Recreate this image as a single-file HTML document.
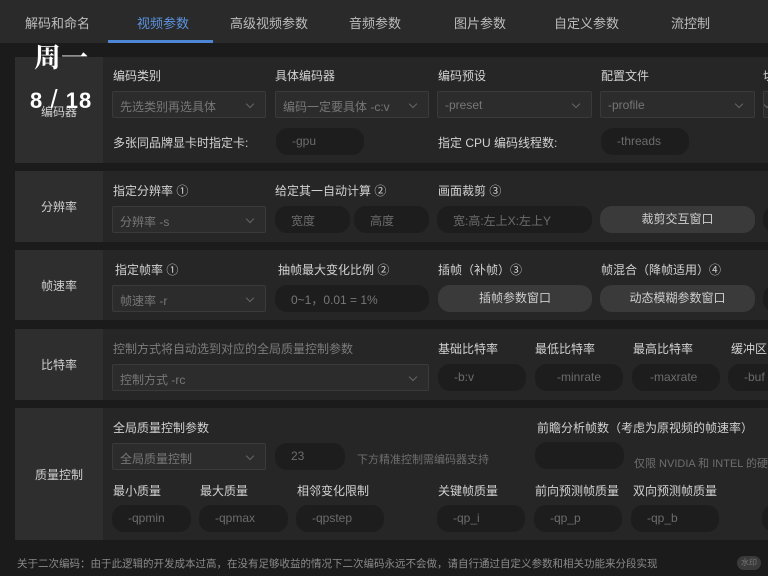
<!DOCTYPE html>
<html><head><meta charset="utf-8"><style>
*{margin:0;padding:0;box-sizing:border-box}
body{width:768px;height:576px;background:#1b1b1b;overflow:hidden;position:relative;font-family:"Liberation Sans","Noto Sans CJK SC",sans-serif;color:#cfcfcf;font-size:12px}
.a{position:absolute;white-space:nowrap}
.tabs{position:absolute;left:0;top:0;width:768px;height:43px;background:#2a2a2a}
.tab{position:absolute;top:13px;font-size:13px;color:#bdbdbd}
.sec{position:absolute;left:15px;width:753px;background:#262626}
.lab{position:absolute;left:0;top:0;bottom:0;width:88px;background:#2e2e2e;display:flex;align-items:center;justify-content:center;font-size:12px;color:#d0d0d0}
.l{position:absolute;font-size:12px;color:#d2d2d2;white-space:nowrap}
.sel{position:absolute;height:27px;background:#2c2c2c;border:1px solid #3a3a3a;border-radius:2px;color:#777;font-size:12px;padding:6px 7px;white-space:nowrap;overflow:hidden}
.sel:after{content:"";position:absolute;right:12px;top:9px;width:5px;height:5px;border-right:1px solid #666;border-bottom:1px solid #666;transform:rotate(45deg)}
.p{position:absolute;height:27px;background:#1d1d1d;border-radius:12px;color:#6c6c6c;font-size:12px;padding:6px 16px;white-space:nowrap;overflow:hidden}
.b{position:absolute;height:27px;background:#3a3a3a;border-radius:12px;color:#cfcfcf;font-size:12px;text-align:center;line-height:27px}
.c{font-size:11px}
</style></head><body>
<div class="tabs">
<div class="tab" style="left:25px">解码和命名</div>
<div class="tab" style="left:137px;color:#5c93dd">视频参数</div>
<div class="a" style="left:108px;top:40px;width:105px;height:3px;background:#4e86d6"></div>
<div class="tab" style="left:230px">高级视频参数</div>
<div class="tab" style="left:349px">音频参数</div>
<div class="tab" style="left:454px">图片参数</div>
<div class="tab" style="left:554px">自定义参数</div>
<div class="tab" style="left:671px">流控制</div>
</div>

<div class="sec" style="top:57px;height:106px"><div class="lab" style="align-items:flex-start;padding-top:46px">编码器</div></div>
<div class="l" style="left:113px;top:67px">编码类别</div>
<div class="l" style="left:275px;top:67px">具体编码器</div>
<div class="l" style="left:438px;top:67px">编码预设</div>
<div class="l" style="left:601px;top:67px">配置文件</div>
<div class="l" style="left:763px;top:67px">切</div>
<div class="sel" style="left:112px;top:91px;width:154px">先选类别再选具体</div>
<div class="sel" style="left:275px;top:91px;width:154px">编码一定要具体 -c:v</div>
<div class="sel" style="left:437px;top:91px;width:155px">-preset</div>
<div class="sel" style="left:600px;top:91px;width:155px">-profile</div>
<div class="sel" style="left:763px;top:91px;width:20px"></div>
<div class="l" style="left:113px;top:134px">多张同品牌显卡时指定卡:</div>
<div class="p" style="left:276px;top:128px;width:88px">-gpu</div>
<div class="l" style="left:438px;top:134px">指定 CPU 编码线程数:</div>
<div class="p" style="left:601px;top:128px;width:88px">-threads</div>

<div class="sec" style="top:171px;height:71px"><div class="lab">分辨率</div></div>
<div class="l" style="left:113px;top:182px">指定分辨率 ①</div>
<div class="l" style="left:275px;top:182px">给定其一自动计算 ②</div>
<div class="l" style="left:438px;top:182px">画面裁剪 ③</div>
<div class="sel" style="left:112px;top:206px;width:154px">分辨率 -s</div>
<div class="p" style="left:275px;top:206px;width:75px">宽度</div>
<div class="p" style="left:354px;top:206px;width:75px">高度</div>
<div class="p" style="left:437px;top:206px;width:155px">宽:高:左上X:左上Y</div>
<div class="b" style="left:600px;top:206px;width:155px">裁剪交互窗口</div>
<div class="p" style="left:763px;top:206px;width:20px"></div>

<div class="sec" style="top:250px;height:70px"><div class="lab">帧速率</div></div>
<div class="l" style="left:115px;top:261px">指定帧率 ①</div>
<div class="l" style="left:278px;top:261px">抽帧最大变化比例 ②</div>
<div class="l" style="left:438px;top:261px">插帧（补帧）③</div>
<div class="l" style="left:601px;top:261px">帧混合（降帧适用）④</div>
<div class="sel" style="left:112px;top:285px;width:154px">帧速率 -r</div>
<div class="p" style="left:275px;top:285px;width:154px;color:#777">0~1，0.01 = 1%</div>
<div class="b" style="left:438px;top:285px;width:154px">插帧参数窗口</div>
<div class="b" style="left:600px;top:285px;width:155px">动态模糊参数窗口</div>
<div class="p" style="left:763px;top:285px;width:20px"></div>

<div class="sec" style="top:329px;height:71px"><div class="lab">比特率</div></div>
<div class="l" style="left:113px;top:340px;color:#7c7c7c">控制方式将自动选到对应的全局质量控制参数</div>
<div class="l" style="left:438px;top:340px">基础比特率</div>
<div class="l" style="left:535px;top:340px">最低比特率</div>
<div class="l" style="left:633px;top:340px">最高比特率</div>
<div class="l" style="left:731px;top:340px">缓冲区</div>
<div class="sel" style="left:112px;top:364px;width:317px">控制方式 -rc</div>
<div class="p" style="left:438px;top:364px;width:88px">-b:v</div>
<div class="p" style="left:535px;top:364px;width:88px;padding-left:22px">-minrate</div>
<div class="p" style="left:632px;top:364px;width:88px;padding-left:18px">-maxrate</div>
<div class="p" style="left:728px;top:364px;width:60px">-buf</div>

<div class="sec" style="top:408px;height:132px"><div class="lab">质量控制</div></div>
<div class="l" style="left:113px;top:419px">全局质量控制参数</div>
<div class="l" style="left:537px;top:419px">前瞻分析帧数（考虑为原视频的帧速率）</div>
<div class="sel" style="left:112px;top:443px;width:154px">全局质量控制</div>
<div class="p" style="left:275px;top:443px;width:70px">23</div>
<div class="l c" style="left:357px;top:451px;color:#6e6e6e">下方精准控制需编码器支持</div>
<div class="p" style="left:535px;top:442px;width:89px"></div>
<div class="l c" style="left:634px;top:455px;color:#6e6e6e">仅限 NVIDIA 和 INTEL 的硬件</div>
<div class="l" style="left:113px;top:482px">最小质量</div>
<div class="l" style="left:200px;top:482px">最大质量</div>
<div class="l" style="left:297px;top:482px">相邻变化限制</div>
<div class="l" style="left:438px;top:482px">关键帧质量</div>
<div class="l" style="left:535px;top:482px">前向预测帧质量</div>
<div class="l" style="left:633px;top:482px">双向预测帧质量</div>
<div class="p" style="left:112px;top:505px;width:79px">-qpmin</div>
<div class="p" style="left:199px;top:505px;width:89px">-qpmax</div>
<div class="p" style="left:296px;top:505px;width:88px">-qpstep</div>
<div class="p" style="left:437px;top:505px;width:88px">-qp_i</div>
<div class="p" style="left:534px;top:505px;width:88px">-qp_p</div>
<div class="p" style="left:631px;top:505px;width:88px">-qp_b</div>
<div class="p" style="left:762px;top:505px;width:20px"></div>

<div class="l" style="left:17px;top:556px;color:#8a8a8a;font-size:10.5px">关于二次编码：由于此逻辑的开发成本过高，在没有足够收益的情况下二次编码永远不会做，请自行通过自定义参数和相关功能来分段实现</div>
<div class="a" style="left:737px;top:556px;width:24px;height:14px;border-radius:7px;background:#3a3a3a;font-size:8px;color:#777;text-align:center;line-height:14px">水印</div>

<div class="a" style="left:34px;top:36px;font-size:27px;font-weight:bold;color:#fff;font-family:'Noto Serif CJK SC','Noto Sans CJK SC',serif">周一</div>
<div class="a" style="left:30px;top:84px;font-size:22px;font-weight:bold;color:#fff;letter-spacing:1px">8 <span style="font-weight:normal;font-size:26px">/</span> 18</div>
</body></html>
